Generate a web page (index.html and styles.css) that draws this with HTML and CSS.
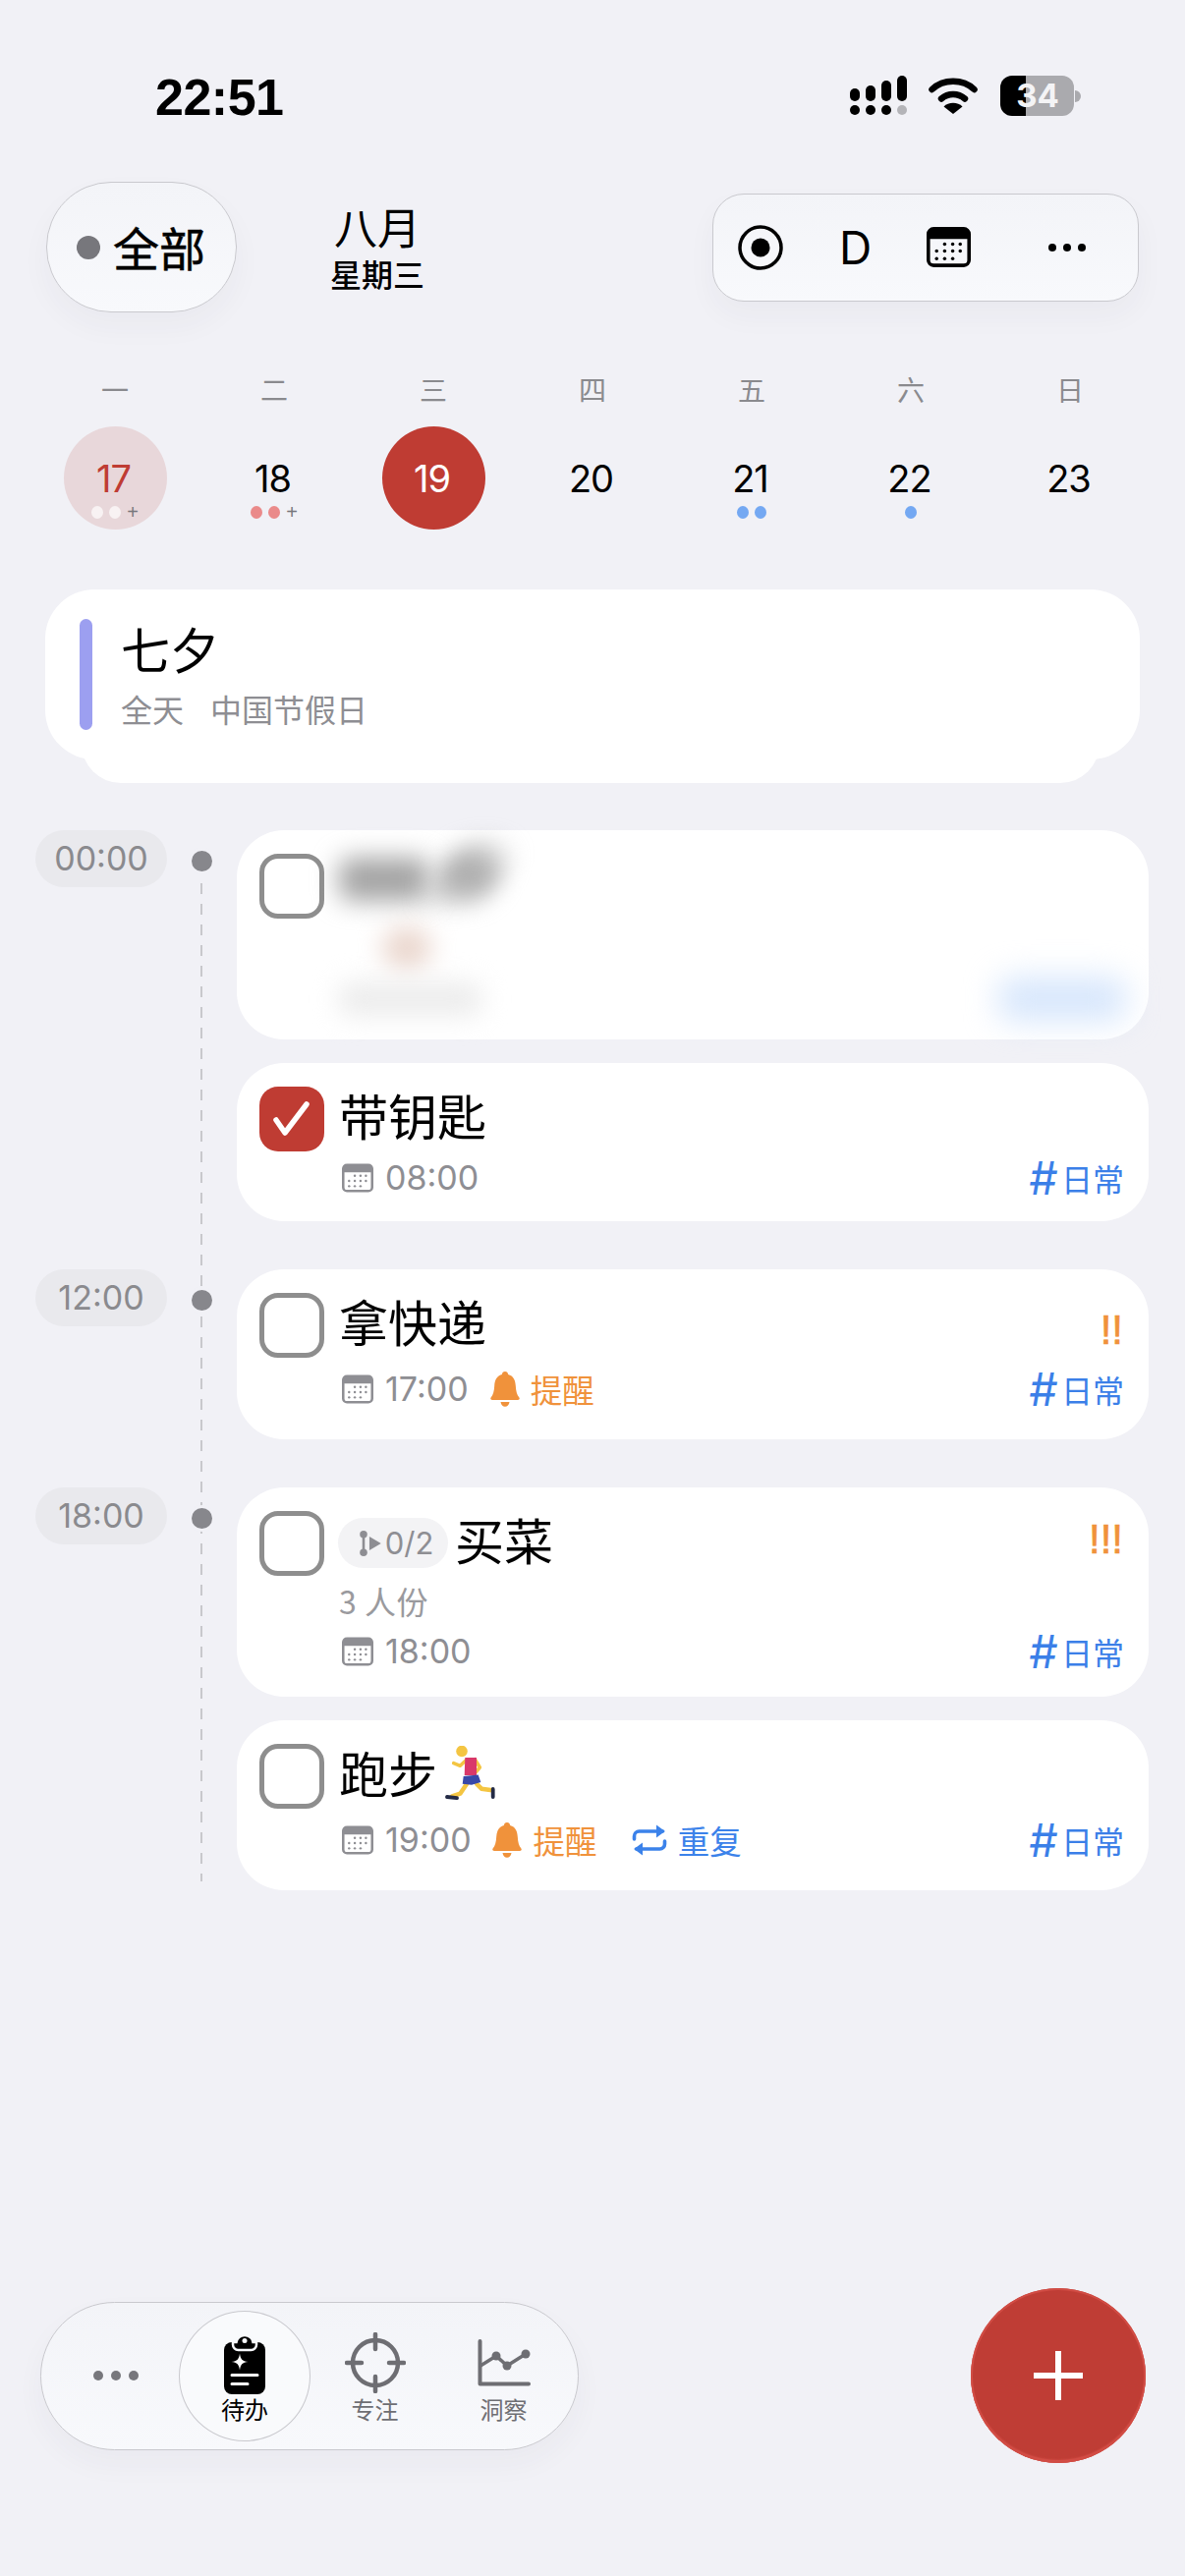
FILE: index.html
```html
<!DOCTYPE html>
<html lang="zh">
<head>
<meta charset="utf-8">
<title>待办</title>
<link rel="stylesheet" href="styles.css">
</head>
<body>
<svg class="defs" width="0" height="0" aria-hidden="true">
  <symbol id="cal" viewBox="0 0 44 40">
    <path fill="currentColor" d="M7 0h30a7 7 0 0 1 7 7v26a7 7 0 0 1-7 7H7a7 7 0 0 1-7-7V7a7 7 0 0 1 7-7Zm-3.500 12v21a3.500 3.500 0 0 0 3.500 3.500h30a3.500 3.500 0 0 0 3.500-3.500V12Z"/>
    <g fill="currentColor">
      <circle cx="18" cy="17" r="1.700"/><circle cx="26" cy="17" r="1.700"/><circle cx="33.500" cy="17" r="1.700"/>
      <circle cx="10" cy="24" r="1.700"/><circle cx="18" cy="24" r="1.700"/><circle cx="26" cy="24" r="1.700"/><circle cx="33.500" cy="24" r="1.700"/>
      <circle cx="10" cy="31.500" r="1.700"/><circle cx="18" cy="31.500" r="1.700"/><circle cx="26" cy="31.500" r="1.700"/>
    </g>
  </symbol>
  <symbol id="bell" viewBox="0 0 30 36">
    <path fill="currentColor" d="M15 0c1.800 0 3 1.200 3.100 3C23.500 4.300 25.500 9 25.800 14.500c.3 5.500 1.200 9 3.600 12 .8 1.200.2 2.500-1.400 2.500H2c-1.600 0-2.200-1.300-1.400-2.500 2.400-3 3.300-6.500 3.600-12C4.500 9 6.500 4.300 11.900 3 12 1.200 13.200 0 15 0ZM10.500 31h9c-.4 2.900-2.200 4.800-4.500 4.800s-4.100-1.900-4.500-4.800Z"/>
  </symbol>
  <symbol id="repeat" viewBox="0 0 36 34">
    <g fill="none" stroke="currentColor" stroke-width="3.600" stroke-linecap="round" stroke-linejoin="round">
      <path d="M2.500 16v-3a5 5 0 0 1 5-5h24"/>
      <path d="M33.500 18v3a5 5 0 0 1-5 5h-24"/>
    </g>
    <path fill="currentColor" d="M25 1.500 33.800 8 25 14.500ZM11 19.500 2.200 26 11 32.500Z"/>
  </symbol>
</svg>

<div class="app">
  <header class="status">
    <span class="clock">22:51</span>
    <div class="status-icons">
      <svg class="signal" width="58" height="42" viewBox="0 0 58 42">
        <g fill="#000">
          <rect x="0" y="13" width="10" height="13" rx="5"/><rect x="16" y="10" width="10" height="16" rx="5"/>
          <rect x="32" y="5" width="10" height="21" rx="5"/><rect x="48" y="0" width="10" height="26" rx="5"/>
          <circle cx="5" cy="35" r="5"/><circle cx="21" cy="35" r="5"/><circle cx="37" cy="35" r="5"/>
        </g>
        <circle cx="53" cy="35" r="5" fill="#b4b4b8"/>
      </svg>
      <svg class="wifi" width="50" height="38" viewBox="0 0 50 38">
        <g fill="none" stroke="#000" stroke-linecap="round">
          <path stroke-width="6.500" d="M3.500 13C15 2 35 2 46.500 13"/>
          <path stroke-width="6.500" d="M13 22.500c7-6 17-6 24 0"/>
        </g>
        <path d="M25 38 15.500 30.500C20 25.500 30 25.500 34.500 30.500Z" fill="#000"/>
      </svg>
      <div class="battery"><span class="battery-num">34</span></div>
      <span class="battery-nub"></span>
    </div>
  </header>

  <section class="topbar">
    <div class="glass filter-pill"><span class="filter-dot"></span><span class="filter-text">全部</span></div>
    <div class="month"><div class="month-name">八月</div><div class="month-day">星期三</div></div>
    <div class="glass toolbar">
      <svg class="tool-radio" width="46" height="46" viewBox="0 0 46 46"><circle cx="23" cy="23" r="21" fill="none" stroke="#000" stroke-width="3.500"/><circle cx="23" cy="23" r="9.500" fill="#000"/></svg>
      <span class="tool-d">D</span>
      <svg class="tool-cal" width="45" height="41"><use href="#cal"/></svg>
      <div class="more tool-more"><i></i><i></i><i></i></div>
    </div>
  </section>

  <section class="week">
    <div class="wk">一</div><div class="wk">二</div><div class="wk">三</div><div class="wk">四</div><div class="wk">五</div><div class="wk">六</div><div class="wk">日</div>
    <div class="cell"><div class="day day-soft"><span class="num">17</span><div class="marks"><i class="mk mk-white"></i><i class="mk mk-white"></i><i class="mk-plus">+</i></div></div></div>
    <div class="cell"><div class="day"><span class="num">18</span><div class="marks"><i class="mk mk-red"></i><i class="mk mk-red"></i><i class="mk-plus">+</i></div></div></div>
    <div class="cell"><div class="day day-today"><span class="num">19</span></div></div>
    <div class="cell"><div class="day"><span class="num">20</span></div></div>
    <div class="cell"><div class="day"><span class="num">21</span><div class="marks"><i class="mk mk-blue"></i><i class="mk mk-blue"></i></div></div></div>
    <div class="cell"><div class="day"><span class="num">22</span><div class="marks"><i class="mk mk-blue"></i></div></div></div>
    <div class="cell"><div class="day"><span class="num">23</span></div></div>
  </section>

  <section class="allday">
    <div class="allday-card">
      <span class="allday-bar"></span>
      <div>
        <div class="allday-title">七夕</div>
        <div class="allday-sub"><span>全天</span><span>中国节假日</span></div>
      </div>
    </div>
  </section>

  <main class="timeline">
    <div class="group">
      <div class="rail"><span class="time-pill">00:00</span><span class="rail-dot"></span></div>
      <div class="cards">
        <article class="card card-blur">
          <span class="check"></span>
          <div class="blur-body">
            <div class="blur-row"><span class="blob blob-a"></span><span class="blob blob-b"></span></div>
            <span class="blob blob-c"></span>
            <div class="blur-foot"><span class="blob blob-d"></span><span class="blob blob-e"></span></div>
          </div>
        </article>
        <article class="card card-s">
          <span class="check check-done"><svg width="66" height="66" viewBox="0 0 66 66"><path d="M17 34l9 13L48 18" fill="none" stroke="#fff" stroke-width="5.500" stroke-linecap="round" stroke-linejoin="round"/></svg></span>
          <div class="body">
            <div class="title-row"><span class="title">带钥匙</span></div>
            <div class="meta meta-s">
              <svg class="ic-cal" width="32" height="30"><use href="#cal"/></svg><span class="time">08:00</span>
              <span class="tag"><b>#</b>日常</span>
            </div>
          </div>
        </article>
      </div>
    </div>

    <div class="group">
      <div class="rail"><span class="time-pill">12:00</span><span class="rail-dot"></span></div>
      <div class="cards">
        <article class="card card-m">
          <span class="check"></span>
          <div class="body">
            <div class="title-row"><span class="title">拿快递</span><span class="prio prio-2">!!</span></div>
            <div class="meta">
              <svg class="ic-cal" width="32" height="30"><use href="#cal"/></svg><span class="time">17:00</span>
              <span class="alert"><svg width="30" height="36"><use href="#bell"/></svg>提醒</span>
              <span class="tag"><b>#</b>日常</span>
            </div>
          </div>
        </article>
      </div>
    </div>

    <div class="group">
      <div class="rail"><span class="time-pill">18:00</span><span class="rail-dot"></span></div>
      <div class="cards">
        <article class="card card-l">
          <span class="check"></span>
          <div class="body">
            <div class="title-row">
              <span class="title-wrap">
                <span class="sub-pill"><svg width="24" height="28" viewBox="0 0 22 26"><g fill="#8e8e93"><circle cx="4.500" cy="4.500" r="3.500"/><circle cx="4.500" cy="21.500" r="3.500"/><rect x="3.300" y="4" width="2.400" height="18"/><path d="M10 6.500 21 13 10 19.500Z"/></g></svg>0/2</span>
                <span class="title">买菜</span>
              </span>
              <span class="prio prio-3">!!!</span>
            </div>
            <div class="note">3 人份</div>
            <div class="meta">
              <svg class="ic-cal" width="32" height="30"><use href="#cal"/></svg><span class="time">18:00</span>
              <span class="tag"><b>#</b>日常</span>
            </div>
          </div>
        </article>
        <article class="card card-m">
          <span class="check"></span>
          <div class="body">
            <div class="title-row">
              <span class="title-wrap">
                <span class="title">跑步</span>
                <svg class="runner" width="51" height="58" viewBox="-3 0 51 58">
                  <g fill="none" stroke-linecap="round" stroke-linejoin="round">
                    <path d="M19 14 12.300 20.300 5.700 17.700" stroke="#f4c542" stroke-width="3.600"/>
                    <path d="M27.300 13.700 32.300 22 26.700 28.700" stroke="#f4c542" stroke-width="3.600"/>
                    <path d="M19 38.700 12.300 48.700 4 51.300" stroke="#f4c542" stroke-width="4.500"/>
                    <path d="M29 38.700 34 43.700 45 45.300" stroke="#f4c542" stroke-width="4.500"/>
                    <path d="M-1 52 9 53.200" stroke="#232a45" stroke-width="3.800"/>
                    <path d="M45.700 44 45.700 52" stroke="#232a45" stroke-width="3.800"/>
                  </g>
                  <circle cx="14" cy="5.500" r="5.800" fill="#f4c542"/>
                  <path d="M17.300 12 29 12 29 30 16.700 30Z" fill="#d9386a"/>
                  <path d="M15.700 31 30.700 29.500 33.300 37 24 39.700 14.700 38.700Z" fill="#3848a8"/>
                </svg>
              </span>
            </div>
            <div class="meta">
              <svg class="ic-cal" width="32" height="30"><use href="#cal"/></svg><span class="time">19:00</span>
              <span class="alert alert-2"><svg width="30" height="36"><use href="#bell"/></svg>提醒</span>
              <span class="repeat"><svg width="36" height="34"><use href="#repeat"/></svg>重复</span>
              <span class="tag"><b>#</b>日常</span>
            </div>
          </div>
        </article>
      </div>
    </div>
  </main>

  <footer class="bottom">
    <nav class="glass tabbar">
      <div class="tab-more"><div class="more more-gray"><i></i><i></i><i></i></div></div>
      <div class="tab tab-on">
        <div class="tab-icon">
          <svg class="clip" width="42" height="60" viewBox="0 0 42 60">
            <rect x="0" y="7" width="42" height="53" rx="8" fill="#000"/>
            <path d="M9 7h3.500C13 3 16.500 0 21 0s8 3 8.500 7H33v2.500a5.500 5.500 0 0 1-5.500 5.500h-13A5.500 5.500 0 0 1 9 9.500Z" fill="#000" stroke="#f8f9fc" stroke-width="2.500"/>
            <circle cx="21" cy="5.500" r="2.500" fill="#f8f9fc"/>
            <path d="M16 18.500C16.800 24.500 18.500 26.200 24.500 27 18.500 27.800 16.800 29.500 16 35.500 15.200 29.500 13.500 27.800 7.500 27 13.500 26.200 15.200 24.500 16 18.500Z" fill="#fff"/>
            <path d="M8 40.500H34M8 49.500H24" stroke="#fff" stroke-width="3" stroke-linecap="round"/>
          </svg>
        </div>
        <span class="tab-label">待办</span>
      </div>
      <div class="tab">
        <div class="tab-icon">
          <svg width="62" height="62" viewBox="0 0 62 62"><g fill="none" stroke="#6e6e73" stroke-width="4.500" stroke-linecap="round"><circle cx="31" cy="31" r="23"/><path d="M31 2V17M31 45V60M2 31H17M45 31H60"/></g></svg>
        </div>
        <span class="tab-label tab-label-off">专注</span>
      </div>
      <div class="tab">
        <div class="tab-icon">
          <svg width="54" height="48" viewBox="0 0 54 48"><g fill="none" stroke="#6e6e73" stroke-linecap="round" stroke-linejoin="round"><path stroke-width="4" d="M2.500 2V45.500H52"/><path stroke-width="3.500" d="M3 27 19 17 30 27 49 15"/></g><g fill="#6e6e73"><circle cx="19" cy="17" r="4.500"/><circle cx="30" cy="27" r="4.500"/><circle cx="49" cy="15" r="4.500"/></g></svg>
        </div>
        <span class="tab-label tab-label-off">洞察</span>
      </div>
    </nav>
    <button class="fab" aria-label="新建"><span class="fab-plus"></span></button>
  </footer>
</div>
</body>
</html>
```

FILE: styles.css
```css
* { box-sizing: border-box; }
html, body { margin: 0; padding: 0; }
body {
  width: 1206px;
  height: 2622px;
  overflow: hidden;
  background: #f1f1f6;
  font-family: "Inter", "Noto Sans CJK SC", sans-serif;
  color: #000;
}
.defs { position: absolute; }
i { font-style: normal; display: block; }
.app { width: 1206px; height: 2622px; display: flex; flex-direction: column; }

/* status bar */
.status { height: 185px; padding: 70px 106px 0 158px; display: flex; justify-content: space-between; align-items: flex-start; }
.clock { font: 700 52px/58px "Liberation Sans", sans-serif; letter-spacing: -.5px; }
.status-icons { display: flex; align-items: flex-start; padding-top: 7px; }
.signal { display: block; }
.wifi { display: block; margin: 1px 0 0 22px; }
.battery { width: 75px; height: 41px; margin-left: 23px; border-radius: 12px; background: linear-gradient(90deg, #000 26px, #aaaaae 26px); display: flex; align-items: center; justify-content: center; }
.battery-num { font: 700 33px/41px "Inter", sans-serif; color: #f4f4f6; padding-left: 1px; }
.battery-nub { width: 6px; height: 12px; margin: 15px 0 0 1px; border-radius: 0 6px 6px 0; background: #aaaaae; }

/* top bar */
.glass {
  background: linear-gradient(180deg, #f3f4f8 0%, #f8f9fc 100%);
  border: 1.5px solid #c9c9ce;
  box-shadow: 0 14px 30px rgba(60, 60, 80, .04);
}
.topbar { height: 133px; padding: 0 47px; display: flex; align-items: center; }
.filter-pill { width: 194px; height: 133px; border-radius: 66px; display: flex; align-items: center; padding-left: 30px; }
.filter-dot { width: 24px; height: 24px; border-radius: 50%; background: #77777c; }
.filter-text { font: 400 47px/60px "Noto Sans CJK SC", sans-serif; margin: -2px 0 0 13px; -webkit-text-stroke: .5px #000; }
.month { width: 120px; margin-left: 83px; text-align: center; font-family: "Noto Sans CJK SC", sans-serif; }
.month-name { font-size: 44px; line-height: 50px; }
.month-day { font-size: 32px; line-height: 40px; font-weight: 500; margin-top: 3px; }
.toolbar { width: 434px; height: 110px; margin-left: auto; border-radius: 32px; display: flex; align-items: center; padding-left: 25px; }
.tool-radio { display: block; }
.tool-d { font: 400 46px/56px "Inter", sans-serif; margin-left: 57px; width: 30px; }
.tool-cal { display: block; margin-left: 59px; color: #000; }
.tool-more { margin-left: 79px; }
.more { display: flex; gap: 7px; }
.more i { width: 8px; height: 8px; border-radius: 50%; background: #000; }
.more-gray i { width: 10px; height: 10px; background: #77777c; }
.more-gray { gap: 8px; }

/* week */
.week { margin-top: 58px; padding: 0 36px; display: grid; grid-template-columns: repeat(7, 162px); }
.wk { height: 40px; font: 400 28px/40px "Noto Sans CJK SC", sans-serif; color: #8a8a8e; text-align: center; }
.cell { margin-top: 18px; display: flex; justify-content: center; }
.day { width: 105px; height: 105px; border-radius: 50%; padding-top: 31px; display: flex; flex-direction: column; align-items: center; }
.day-soft { background: #e8d7da; color: #bf3c33; }
.day-today { background: #bf3c33; color: #fff; }
.num { font: 400 38px/44px "Inter", sans-serif; letter-spacing: -1px; padding-right: 3px; }
.marks { display: flex; gap: 6px; margin-top: 5px; height: 14px; align-items: center; }
.mk { width: 12px; height: 13px; border-radius: 50%; }
.mk-white { background: #f8f2f3; }
.mk-red { background: #ea8a8a; }
.mk-blue { background: #74a8f2; }
.mk-plus { width: 12px; font: 400 20px/14px "Liberation Sans", sans-serif; color: #77777c; text-align: center; }

/* all-day */
.allday { margin: 61px 46px 0; padding-bottom: 24px; position: relative; }
.allday::after { content: ""; position: absolute; left: 37px; right: 41px; bottom: 0; height: 60px; background: #fff; border-radius: 0 0 40px 40px; }
.allday-card { position: relative; z-index: 1; height: 173px; background: #fff; border-radius: 50px; padding: 30px 0 0 35px; display: flex; gap: 29px; }
.allday-bar { width: 13px; height: 113px; border-radius: 7px; background: #9c9ff0; }
.allday-title { font: 400 50px/58px "Noto Sans CJK SC", sans-serif; }
.allday-sub { font: 400 32px/46px "Noto Sans CJK SC", sans-serif; color: #8e8e93; display: flex; gap: 27px; margin-top: 10px; }

/* timeline */
.timeline { margin-top: 48px; padding: 0 37px 0 36px; position: relative; display: flex; flex-direction: column; gap: 49px; }
.timeline::before {
  content: "";
  position: absolute;
  left: 204px;
  top: 54px;
  bottom: 9px;
  width: 2px;
  background: repeating-linear-gradient(180deg, #c8c8cc 0 11px, transparent 11px 21px);
}
.group { display: flex; position: relative; }
.rail { width: 205px; height: 58px; display: flex; align-items: center; flex: none; }
.time-pill { width: 134px; height: 58px; border-radius: 29px; background: #e9e9ed; color: #8a8a8e; font-size: 34px; line-height: 58px; text-align: center; }
.rail-dot { width: 21px; height: 21px; margin: 4px 0 0 25px; border-radius: 50%; background: #87878c; box-shadow: 0 0 0 3px #f1f1f6; }
.cards { flex: 1; display: flex; flex-direction: column; gap: 24px; }
.card { background: #fff; border-radius: 48px; padding: 24px 25px 0 23px; display: flex; gap: 15px; }
.card-blur { height: 213px; }
.card-s { height: 161px; }
.card-m { height: 173px; }
.card-l { height: 213px; }
.check { width: 66px; height: 66px; flex: none; border: 5px solid #8e8e8e; border-radius: 19px; background: #fff; }
.check-done { border: 0; background: #bf3c33; }
.check-done svg { display: block; }
.body { flex: 1; min-width: 0; }
.title-row { height: 66px; display: flex; justify-content: space-between; align-items: center; }
.title-wrap { display: flex; align-items: center; }
.title { font: 400 50px/60px "Noto Sans CJK SC", sans-serif; margin-top: -10px; }
.prio { font: 400 42px/42px "Liberation Sans", sans-serif; color: #f0923b; -webkit-text-stroke: .7px #f0923b; }
.prio-2 { margin: 10px 1px 0 0; }
.prio-3 { margin: -8px 1px 0 0; }
.meta { height: 40px; margin-top: 12px; display: flex; align-items: center; }
.meta-s { margin-top: 7px; }
.ic-cal { display: block; color: #8e8e93; flex: none; margin-left: 3px; }
.time { font-size: 34px; line-height: 40px; color: #8e8e93; margin-left: 12px; }
.alert { display: flex; align-items: center; gap: 11px; margin-left: 22px; color: #f0923b; font: 400 32.500px/40px "Noto Sans CJK SC", sans-serif; }
.alert-2 { margin-left: 21px; gap: 12px; }
.repeat { display: flex; align-items: center; gap: 11px; margin-left: 35px; color: #3b82ea; font: 400 32.500px/40px "Noto Sans CJK SC", sans-serif; }
.tag { margin-left: auto; color: #3b7fe8; font: 400 32px/40px "Noto Sans CJK SC", sans-serif; display: flex; align-items: center; gap: 4px; }
.tag b { font: 400 46px/40px "Inter", sans-serif; font-style: italic; }
.note { height: 40px; margin-top: 5px; font: 400 32px/40px "Noto Sans CJK SC", sans-serif; color: #9a9a9e; letter-spacing: .5px; }
.sub-pill { width: 112px; height: 51px; border-radius: 26px; background: #f3f3f5; color: #8e8e93; font-size: 31px; line-height: 51px; display: flex; align-items: center; justify-content: center; gap: 3px; margin: -1px 7px 0 -1px; padding-left: 6px; }
.runner { display: block; margin: -4px 0 0 8px; }

/* blurred card */
.blur-body { flex: 1; padding-top: 4px; }
.blur-row { display: flex; gap: 8px; }
.blob { display: block; filter: blur(13px); }
.blob-a { width: 92px; height: 44px; background: #a4a4a4; border-radius: 12px; }
.blob-b { width: 66px; height: 56px; margin-top: -12px; background: #b0b0b0; border-radius: 40% 60% 30% 40%; transform: skewX(-20deg); }
.blob-c { width: 50px; height: 44px; margin: 26px 0 0 44px; background: #ead6cd; border-radius: 50%; }
.blur-foot { display: flex; justify-content: space-between; align-items: center; margin-top: 8px; }
.blob-d { width: 145px; height: 34px; background: #ececec; border-radius: 10px; }
.blob-e { width: 130px; height: 44px; margin-right: -2px; background: #d6e6fc; border-radius: 14px; filter: blur(16px); }

/* bottom */
.bottom { margin-top: auto; padding: 0 40px 115px 41px; display: flex; align-items: center; justify-content: space-between; }
.tabbar { width: 548px; height: 151px; border-radius: 76px; display: flex; align-items: center; }
.tab-more { width: 140px; padding-left: 11px; flex: none; display: flex; justify-content: center; }
.tab { width: 131px; flex: none; height: 133px; padding-top: 22px; display: flex; flex-direction: column; align-items: center; }
.tab-on { width: 134px; border: 1.5px solid #c9c9ce; border-radius: 50%; background: #f9fafc; padding-top: 21px; }
.tab-icon { height: 62px; display: flex; align-items: center; justify-content: center; }
.tab-icon svg { display: block; }
.clip { margin-top: 4px; }
.tab-label { font: 400 24px/30px "Noto Sans CJK SC", sans-serif; margin-top: 1px; }
.tab-label-off { color: #6e6e73; }
.fab { width: 178px; height: 178px; padding: 0; border-radius: 50%; border: 0; background: #bf3d35; box-shadow: inset 0 0 0 2px #d14c44, inset 0 -3px 2px #d9534c; display: flex; align-items: center; justify-content: center; position: relative; }
.fab-plus { width: 50px; height: 50px; background: linear-gradient(#fff, #fff) center/100% 6px no-repeat, linear-gradient(#fff, #fff) center/6px 100% no-repeat; border-radius: 3px; }
```
